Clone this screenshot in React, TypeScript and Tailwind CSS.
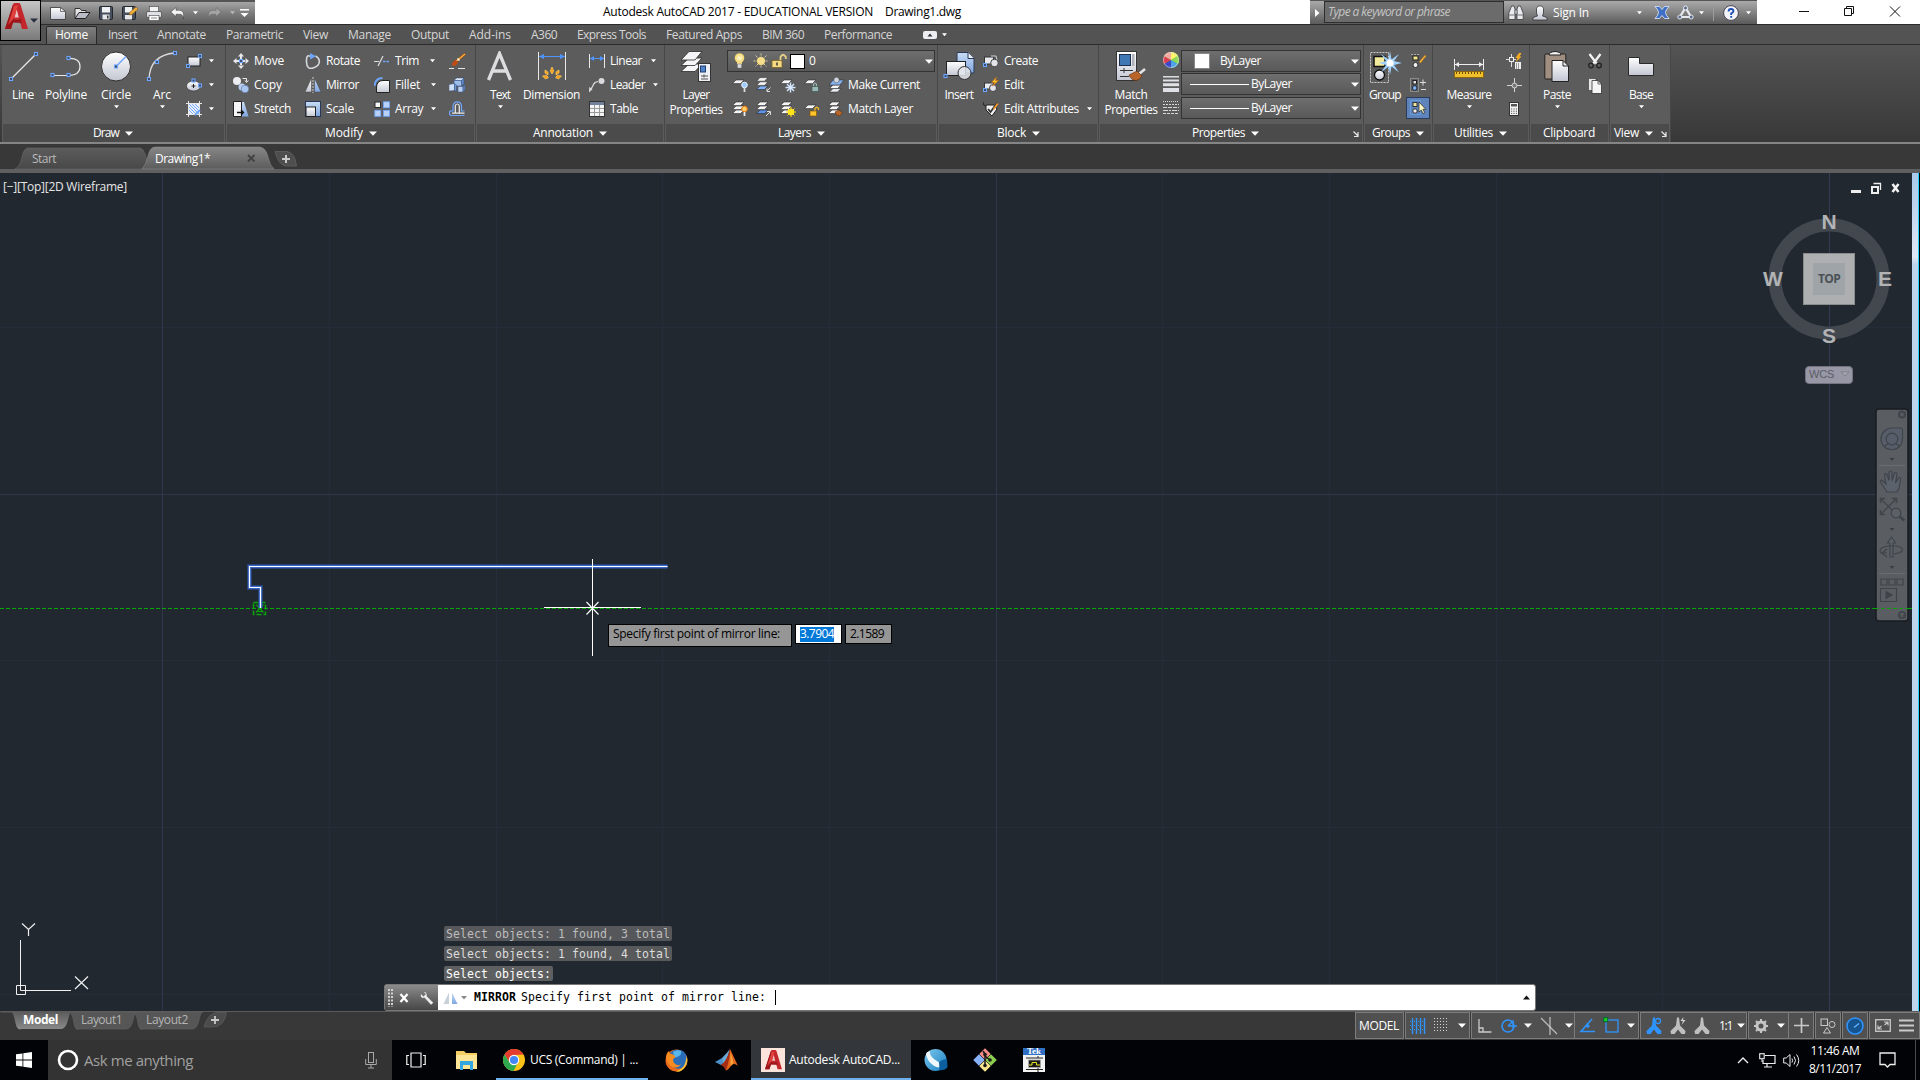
import React, { useLayoutEffect, useRef, useState } from "react";

/* Text whose tracking is computed so that it fills a known width. */
function T({ s, w, c = "" }: { s: string; w: number; c?: string }) {
  const ref = useRef<HTMLSpanElement>(null);
  const [ls, setLs] = useState(0);
  useLayoutEffect(() => {
    if (!ref.current) return;
    const natural = ref.current.getBoundingClientRect().width;
    setLs((w - natural) / s.length);
  }, [s, w]);
  return (
    <span ref={ref} className={"inline-block whitespace-pre shrink-0 " + c} style={{ letterSpacing: ls }}>
      {s}
    </span>
  );
}

function Svg({ w, h, c = "", children }: { w: number; h: number; c?: string; children: React.ReactNode }) {
  return (
    <svg width={w} height={h} viewBox={`0 0 ${w} ${h}`} className={"shrink-0 block " + c} fill="none">
      {children}
    </svg>
  );
}

function Arrow({ c = "", big = false, fill = "#fff" }: { c?: string; big?: boolean; fill?: string }) {
  return big ? (
    <Svg w={8} h={5} c={c}><path d="M0 0.5h8L4 4.8z" fill={fill} /></Svg>
  ) : (
    <Svg w={5} h={4} c={c}><path d="M0 0.3h5L2.5 3.3z" fill={fill} /></Svg>
  );
}

const B = "#6ea6ff";
const Node = ({ x, y }: { x: number; y: number }) => (
  <rect x={x - 1.5} y={y - 1.5} width="3" height="3" fill="#3a4660" stroke={B} strokeWidth="1.1" />
);

function Defs() {
  return (
    <svg width="0" height="0" className="absolute">
      <defs>
        <linearGradient id="wg" x1="0" y1="0" x2="0" y2="1"><stop offset="0" stopColor="#fff" /><stop offset="1" stopColor="#c3c7d3" /></linearGradient>
        <linearGradient id="bg" x1="0" y1="0" x2="0" y2="1"><stop offset="0" stopColor="#c9dcf5" /><stop offset="1" stopColor="#7fa6e0" /></linearGradient>
        <linearGradient id="tabOn" x1="0" y1="0" x2="0" y2="1"><stop offset="0" stopColor="#868686" /><stop offset="1" stopColor="#5c5c5c" /></linearGradient>
        <linearGradient id="tabOff" x1="0" y1="0" x2="0" y2="1"><stop offset="0" stopColor="#5c5c5c" /><stop offset="1" stopColor="#484848" /></linearGradient>
        <linearGradient id="modOn" x1="0" y1="0" x2="0" y2="1"><stop offset="0" stopColor="#5c5c5c" /><stop offset="1" stopColor="#8a8a8a" /></linearGradient>
        <linearGradient id="sky" x1="0" y1="0" x2="1" y2="1"><stop offset="0" stopColor="#7cc8ee" /><stop offset="1" stopColor="#1b7fc0" /></linearGradient>
        <radialGradient id="glow"><stop offset="0" stopColor="#fffbd8" /><stop offset="1" stopColor="#f4d46a" /></radialGradient>
      </defs>
    </svg>
  );
}

/* ---------- title bar ---------- */
function AutoA({ s, c = "" }: { s: number; c?: string }) {
  return (
    <svg width={s} height={s * 1.13} viewBox="0 0 23 26" className={"shrink-0 block " + c}>
      <path d="M0 26 8 1.5Q8.5 0 10 0h3.5Q15 0 15.500 1.5L23 26h-6l-1.700-6.500H8L6 26z" fill="#c3272b" />
      <path d="M9.500 14.500 11.700 6 13.800 14.500z" fill="#e9c3c1" />
      <path d="M8 1.500 0 26l6 0 2-6.500 6-2.500-5 0z" fill="#9c1519" />
      <path d="M9 3 13.500 2 11.700 6 9.500 14.500 3 22z" fill="#e0413f" />
      <path d="M8 19.500l8-4 1 5z" fill="#7e0d11" opacity=".55" />
    </svg>
  );
}

function TitleBar() {
  return (
    <div className="relative flex h-[24px] shrink-0 bg-white text-[12px] leading-none">
      <div className="absolute left-0 top-0 z-10 flex h-[41px] w-[41px] border border-black bg-linear-to-b from-[#c6c6c6] to-[#7a7a7a] pl-[4px] pt-[2px]">
        <AutoA s={23} />
        <Arrow big c="mt-[15px] ml-[2px]" fill="#2b3140" />
      </div>
      <div className="flex w-[255px] shrink-0 items-center border-t-2 border-[#555] bg-linear-to-b from-[#a6a6a6] via-[#7d7d7d] to-[#5c5c5c] pl-[50px]">
        <Svg w={16} h={14}><path d="M.5 1.500h10l5 4v8H.5z" fill="url(#wg)" stroke="#333" strokeWidth=".8" /><path d="M10.500 1.500v4h5" stroke="#555" strokeWidth=".8" /></Svg>
        <Svg w={17} h={14} c="ml-[8px]"><path d="M1 12V2.500h5l1.500 2H12V7" fill="#e4e4e6" stroke="#333" /><path d="M1 12.500 5 6.500h11l-4.500 6z" fill="#b9bdc5" stroke="#222" /></Svg>
        <Svg w={15} h={14} c="ml-[8px]"><rect x=".5" y=".5" width="13" height="13" rx="1" fill="#474f5c" stroke="#22262d" /><rect x="3" y="1" width="8" height="5.500" fill="#f0f1f3" /><rect x="3.500" y="8.500" width="7" height="5" fill="#e4e6ea" /><rect x="8" y="9.500" width="1.500" height="3" fill="#333" /></Svg>
        <Svg w={16} h={14} c="ml-[8px]"><rect x=".5" y=".5" width="13" height="13" rx="1" fill="#474f5c" stroke="#22262d" /><rect x="3" y="1" width="7" height="5.500" fill="#f0f1f3" /><rect x="3" y="9" width="7" height="4.500" fill="#e4e6ea" /><path d="m7 9 1-3 6-5 2 2-6 5.500z" fill="#f0b13a" stroke="#8a5a14" strokeWidth=".6" /></Svg>
        <Svg w={16} h={15} c="ml-[8px]"><rect x="3.500" y=".5" width="9" height="6" fill="#f4f4f6" stroke="#444" strokeWidth=".6" /><rect x=".5" y="5.500" width="15" height="6" rx="1.500" fill="#dfe1e6" stroke="#333" strokeWidth=".6" /><rect x="3" y="9.500" width="10" height="5" fill="#fbfbfb" stroke="#444" strokeWidth=".6" /><path d="M5 12h6" stroke="#888" /></Svg>
        <Svg w={16} h={12} c="ml-[8px]"><path d="M.8 5 6 .5v2.800h4q4.500.4 3.500 8.500-.5-4.300-3.500-4.500H6v2.300z" fill="#f2f2f3" stroke="#3a3a3a" strokeWidth=".5" /></Svg>
        <Arrow c="ml-[7px]" />
        <Svg w={15} h={12} c="ml-[9px]"><path d="M14.200 5 9 .5v2.800H5Q.8 3.700 1.500 11.800q.5-4.300 3.500-4.500h4v2.300z" fill="#a3a3a3" stroke="#666" strokeWidth=".5" /></Svg>
        <Arrow c="ml-[8px]" fill="#b8b8b8" />
        <Svg w={9} h={9} c="ml-[5px]"><path d="M0 .8h9" stroke="#fff" strokeWidth="1.500" /><path d="M.5 4h8l-4 4z" fill="#fff" /></Svg>
      </div>
      <div className="flex w-[1055px] shrink-0 pl-[348px] pt-[5px] leading-[14px] text-black">
        <T s="Autodesk AutoCAD 2017 - EDUCATIONAL VERSION" w={270} />
        <T s="Drawing1.dwg" w={76} c="ml-[12px]" />
      </div>
      <div className="flex w-[447px] shrink-0 items-center border-t border-[#555] bg-linear-to-b from-[#aaa] via-[#838383] to-[#5a5a5a] text-white">
        <Svg w={14} h={10}><path d="M5 1v8l4.500-4z" fill="#fff" /></Svg>
        <div className="mt-[-1px] flex h-[22px] w-[180px] items-center border border-[#2e2e2e] bg-[#6b6b6b] pl-[3px] italic text-[#c4c4c4]">
          <T s="Type a keyword or phrase" w={122} />
        </div>
        <Svg w={16} h={16} c="ml-[4px]"><path d="M2 5 3.500 1h2.500l1 3v10.500H.8V8zM14 5 12.500 1H10L9 4v10.500h6.200V8z" fill="#e9eaee" stroke="#3a3a3a" strokeWidth=".8" /><path d="M7 5h2v4H7z" fill="#cfd1d6" stroke="#3a3a3a" strokeWidth=".5" /><path d="M1 10h6M9 10h6" stroke="#777" /></Svg>
        <Svg w={16} h={16} c="ml-[8px]"><path d="M1 15v-2.500l4.500-1.500L4.500 8V3.500Q5 .8 8 .8t3.500 2.700V8l-1 3 4.500 1.500V15z" fill="url(#wg)" stroke="#333" strokeWidth=".8" /></Svg>
        <T s="Sign In" w={36} c="ml-[5px]" />
        <Arrow c="ml-[48px]" />
        <Svg w={16} h={15} c="ml-[12px]"><path d="M1 1.500h4.500l2.500 3 2.500-3H15Q11.500 5 11.500 7.500T15 13.500h-4.500l-2.500-3-2.500 3H1Q4.500 10 4.500 7.500T1 1.500z" fill="#3f6fc4" stroke="#d6e0f4" strokeWidth=".9" /></Svg>
        <Svg w={17} h={15} c="ml-[7px]"><path d="M8.500 2.500 3 12h11z" stroke="#e7e9ef" strokeWidth="2.200" /><circle cx="8.500" cy="3" r="2" fill="#5a6a90" stroke="#e7e9ef" /><circle cx="2.800" cy="12" r="2" fill="#5a6a90" stroke="#e7e9ef" /><circle cx="14.200" cy="12" r="2" fill="#5a6a90" stroke="#e7e9ef" /></Svg>
        <Arrow c="ml-[5px]" />
        <div className="ml-[9px] h-[17px] w-px bg-[#9b9b9b]" />
        <Svg w={16} h={16} c="ml-[9px]"><circle cx="8" cy="8" r="7.400" fill="#f2f4f8" stroke="#445" /><path d="M5.600 6.400Q5.600 4 8 4t2.400 2.200Q10.400 7.600 8.200 8.400V10M8.200 11v1.800" stroke="#1d4fb5" strokeWidth="1.900" /></Svg>
        <Arrow c="ml-[7px]" />
      </div>
      <Svg w={160} h={22}>
        <path d="M42 11.500h10M87.500 8.500h7v7h-7zM89.500 8.500v-2h7v7h-2M133 6.500l10 10M143 6.500l-10 10" stroke="#111" />
      </Svg>
    </div>
  );
}

const TABS: [string, number][] = [
  ["Insert", 29], ["Annotate", 49], ["Parametric", 57], ["View", 25], ["Manage", 43], ["Output", 38], ["Add-ins", 42],
  ["A360", 26], ["Express Tools", 69], ["Featured Apps", 76], ["BIM 360", 42], ["Performance", 68],
];

function RibbonTabs() {
  return (
    <div className="flex h-[21px] shrink-0 items-center border-b border-t border-[#2b2b2b] bg-[#535353] pl-[46px] text-[12px] leading-[14px] text-[#d6d6d6]">
      <div className="flex h-[18px] w-[51px] self-end items-center rounded-t-[2px] border border-b-0 border-[#272727] bg-linear-to-b from-[#7e7e7e] to-[#5f5f5f] pb-[2px] pl-[8px] text-white">
        <T s="Home" w={33} />
      </div>
      <div className="ml-[11px] flex gap-[20px]">
        {TABS.map(([s, w]) => <T key={s} s={s} w={w} />)}
      </div>
      <Svg w={14} h={8} c="ml-[31px]"><rect width="14" height="8" rx="2" fill="#eceef2" /><path d="M4.500 5.500h5L7 2.500z" fill="#333" /></Svg>
      <Arrow c="ml-[5px]" />
    </div>
  );
}

/* ---------- ribbon building blocks ---------- */
function Panel({ cls, title, w, pre, dialog = 0, noArrow = false, children }: any) {
  return (
    <div className={"flex shrink-0 flex-col border-r border-[#474747] bg-[#5c5c5c] " + cls}>
      <div className="flex h-[79px]">{children}</div>
      <div className={"mx-px flex h-[18px] items-center bg-[#4b4b4b] leading-[14px] " + pre}>
        <T s={title} w={w} />
        {!noArrow && <Arrow big c="ml-[6px]" />}
        {dialog > 0 && <Svg w={6} h={6} c={dialog === 1 ? "ml-[94px] mt-[2px]" : "ml-[8px] mt-[2px]"}><path d="M.5.5l4 4M5 1v4.500H1" stroke="#e8e8e8" strokeWidth="1.200" /></Svg>}
      </div>
    </div>
  );
}

function Big({ cls, icon, label, w, label2, w2, arrow }: any) {
  return (
    <div className={"flex shrink-0 flex-col items-center pt-[6px] leading-[15px] " + cls}>
      <div className="flex h-[32px] items-start justify-center">{icon}</div>
      <T s={label} w={w} c="mt-[4px]" />
      {label2 && <T s={label2} w={w2} />}
      {arrow && <Arrow c="mt-[3px]" />}
    </div>
  );
}

function Row({ icon, label, w, arrow }: any) {
  return (
    <div className="flex h-[24px] items-center leading-[16px]">
      {icon}
      {label && <T s={label} w={w} c="ml-[5px]" />}
      {arrow && <Arrow c={arrow} />}
    </div>
  );
}

const RowCol = ({ cls = "", children }: any) => <div className={"flex shrink-0 flex-col pt-[4px] " + cls}>{children}</div>;

/* ---------- small icons ---------- */
const ic = {
  rect: <Svg w={16} h={16}><rect x="2" y="4" width="12" height="9" fill="url(#wg)" stroke="#222" /><Node x={14} y={3} /><Node x={2} y={13} /></Svg>,
  ellipse: <Svg w={16} h={16}><ellipse cx="7.500" cy="9" rx="7" ry="5" fill="url(#wg)" stroke="#333" strokeWidth=".6" /><path d="M5.500 9h4M7.500 7v4" stroke="#222" /><Node x={7.500} y={3.500} /><Node x={14} y={8.500} /></Svg>,
  hatch: <Svg w={16} h={16}><rect x="3" y="3" width="10" height="10" fill="#e6edf8" /><path d="M3 9l4 4M3 6l7 7M3 3l10 10M6 3l7 7M9 3l4 4" stroke={B} strokeWidth=".9" /><path d="M0 2.500h16M0 13.500h16M2.500 0v16M13.500 0v16" stroke="#e8e8e8" /><path d="M9 14l5-5" stroke={B} strokeWidth="2" /></Svg>,
  move: <Svg w={16} h={16}><path d="M8 0l3 3.500H5zM8 16l3-3.500H5zM0 8l3.500-3v6zM16 8l-3.500-3v6zM7 3h2v3H7zM7 10h2v3H7zM3 7h3v2H3zM10 7h3v2h-3z" fill="#e7e8ec" /><Node x={8} y={8} /></Svg>,
  copy: <Svg w={16} h={16}><circle cx="4" cy="4" r="4" fill="#eceef3" /><circle cx="9" cy="10" r="3.500" fill="#b6cdf0" /><circle cx="12" cy="12" r="3.800" fill="#a9c6f2" stroke="#5a6f96" strokeWidth=".6" /><path d="M9.500 1.500h4v3M12 3.500l1.500 2 1.800-2" stroke="#eee" /></Svg>,
  stretch: <Svg w={16} h={16}><path d="M9 1h2l4.500 14.500H9z" fill="url(#bg)" /><path d="M.5.5h8v15h-8z" fill="#f5f5f7" stroke="#222" /><path d="M4 11.500h6M8 9l2.500 2.500L8 14" stroke="#111" strokeWidth="1.300" /></Svg>,
  rotate: <Svg w={16} h={16}><path d="M10.500 3Q14.500 5 14.300 9T8 15 1.500 9 5 3.200" stroke="#d5d7dc" strokeWidth="1.600" /><path d="M5 0l6 3.200-6 3.200z" fill={B} /></Svg>,
  mirror: <Svg w={16} h={16}><path d="M6.500 1v14H0z" fill="url(#wg)" stroke="#444" strokeWidth=".5" /><path d="M9.500 1v14H16z" fill="url(#bg)" stroke="#444" strokeWidth=".5" /><path d="M8 0v16" stroke="#eee" strokeWidth=".8" strokeDasharray="2 1" /></Svg>,
  scale: <Svg w={16} h={16}><rect x=".5" y=".5" width="15" height="15" fill="url(#bg)" stroke="#29395c" /><rect x="1" y="6" width="9.500" height="9.500" fill="url(#wg)" stroke="#222" /></Svg>,
  trim: <Svg w={16} h={16}><path d="M0 8.500h5M4 13 9 3" stroke="#dadce0" strokeWidth="1.200" /><path d="M9 8.500h7" stroke={B} strokeWidth="1.300" strokeDasharray="2.500 1" /></Svg>,
  fillet: <Svg w={16} h={16}><path d="M2.500 15.500V10Q3 3.500 9 3.500h6.500v12z" fill="url(#wg)" stroke="#222" /><path d="M.5 9Q1 1.500 8.500 1" stroke={B} strokeWidth="1.800" /></Svg>,
  array: <Svg w={16} h={16}><rect x="1" y="1" width="5.500" height="5.500" fill="#f7f7f7" stroke="#2b2b2b" /><g fill="#b7d1f8" stroke={B} strokeWidth=".8"><rect x="9.500" y=".8" width="6" height="6" /><rect x=".8" y="9.300" width="6" height="6" /><rect x="9.500" y="9.300" width="6" height="6" /></g></Svg>,
  erase: <Svg w={17} h={16}><path d="M15.500 0 17 1.500 8 9 6.500 7.500z" fill="#f6a83a" stroke="#7b3d10" strokeWidth=".6" /><path d="M6.500 7 9 9.500Q7 14 3 12.500q0-4 3.500-5.500z" fill="#c24b14" /><path d="M8.500 5.500l2 2" stroke="#fff" strokeWidth="1.500" /><path d="M0 15.500h5M9 15.500h7" stroke="#e6e6e6" /></Svg>,
  explode: <Svg w={16} h={16}><path d="M5 3.500l2.500-2.500H15l-2.500 2.500z" fill="#dbe8fa" stroke="#35507e" strokeWidth=".5" /><path d="M12.500 3.500 15 1v6l-2.500 2z" fill="#5d87c9" stroke="#35507e" strokeWidth=".5" /><path d="M5 3.500h7.500V9H5z" fill="#9dbdea" stroke="#35507e" strokeWidth=".5" /><path d="M0 7.500l5.500-1v7L0 14z" fill="#cfe0f8" stroke="#35507e" strokeWidth=".5" /><path d="M5.500 6.500 7.500 8v6l-2-.5z" fill="#6f97d3" stroke="#35507e" strokeWidth=".5" /><path d="M9 9.500h5V15H9z" fill="#b9d0f3" stroke="#35507e" strokeWidth=".5" /><path d="M14 9.500l2-2V13l-2 2z" fill="#5d87c9" stroke="#35507e" strokeWidth=".5" /></Svg>,
  offset: <Svg w={16} h={16}><path d="M15.500 14.500h-13Q.5 14.500.5 12t2-2H4V5Q4.500.8 8.300.8T12.500 5v5h3" stroke={B} strokeWidth="1.200" /><path d="M15.500 12.200H3M6.300 12V5q.3-2 2-2t2 2v7" stroke="#eee" strokeWidth="1.200" /></Svg>,
  linear: <Svg w={16} h={16}><path d="M.5 1v14M15.500 1v14" stroke="#e8e8e8" /><path d="M1 5.500h14" stroke="#4f94ff" /><path d="M1 5.500 5 3v5zM15 5.500 11 3v5z" fill="#4f94ff" /></Svg>,
  leader: <Svg w={16} h={16}><path d="M1.500 12.500Q3.500 10 4.500 7.500T9 4.500" stroke="#dcdcdc" strokeWidth="1.200" /><path d="M0 15.500.2 10l3.500 2z" fill="#dcdcdc" /><circle cx="12.500" cy="4" r="3" fill="#d9dade" /></Svg>,
  table: <Svg w={16} h={16}><rect x=".5" y=".5" width="15" height="15" fill="#f4f4f4" stroke="#333" /><rect x="1" y="1" width="14" height="3" fill="#72809c" /><path d="M1 7.500h14M1 11.500h14M5.500 4v11M10.500 4v11" stroke="#9a9a9a" /></Svg>,
  create: <Svg w={16} h={16}><rect x="1.500" y="4" width="9" height="7" fill="#e9eaee" stroke="#333" /><path d="M8 3h5l1 4" stroke="#d0d3da" /><circle cx="11.500" cy="10" r="3.800" fill="#e2e4e9" stroke="#444" /><Node x={2} y={12} /></Svg>,
  edit: <Svg w={16} h={16}><rect x="1.500" y="6" width="9" height="6" fill="#e9eaee" stroke="#333" /><circle cx="10" cy="11" r="3.500" fill="#e2e4e9" stroke="#444" /><path d="M13.500 0 8.500 5.500h3L9.500 9l6-5.500h-3z" fill="#ffc531" stroke="#c26a0c" strokeWidth=".6" /><Node x={2} y={13} /></Svg>,
  attr: <Svg w={16} h={16}><path d="M0 1q0 4 3 4" stroke="#222" /><path d="M3 4h8l3 4-5 7-6-6z" fill="#f0f0f2" stroke="#222" /><path d="M5 8l2.500 3L14 2" stroke="#333" strokeWidth="1.800" /><path d="M10 7.500 14 2l1.500 1-4 5.500z" fill="#f3962b" /></Svg>,
  wheel: <Svg w={16} h={16}><circle cx="8" cy="8" r="8" fill="#3cc43a" /><path d="M8 8V0A8 8 0 0 1 15 4z" fill="#fff36b" /><path d="M8 8l7-4a8 8 0 0 1 0 8z" fill="#8fd955" /><path d="M8 8l7 4a8 8 0 0 1-7 4z" fill="#4fa2e8" /><path d="M8 8v8a8 8 0 0 1-7-4z" fill="#3c47c8" /><path d="M8 8l-7 4a8 8 0 0 1 0-8z" fill="#df3c52" /><path d="M8 8 1 4a8 8 0 0 1 7-4z" fill="#f6a9a0" /><circle cx="8" cy="8" r="7.500" stroke="#ddd" strokeOpacity=".6" /></Svg>,
  lweight: <Svg w={16} h={16}><path d="M0 .8h16" stroke="#dfe1e6" strokeWidth="1.500" /><path d="M0 4.500h16" stroke="#dfe1e6" strokeWidth="2" /><path d="M0 8.700h16" stroke="#dfe1e6" strokeWidth="3" /><path d="M0 14h16" stroke="#dfe1e6" strokeWidth="4" /></Svg>,
  ltype: <Svg w={16} h={16}><path d="M0 1.500h16" stroke="#d8d8d8" strokeDasharray="1 1" /><path d="M0 4.500h16" stroke="#d8d8d8" strokeDasharray="2 1" /><path d="M0 7.500h16" stroke="#d8d8d8" strokeDasharray="4 1" /><path d="M0 10.500h16" stroke="#d8d8d8" strokeDasharray="5 1 2 1" /><path d="M0 13.500h16" stroke="#d8d8d8" strokeDasharray="3 1" /></Svg>,
  gedit: <Svg w={16} h={16}><path d="M1 1.500h9" stroke="#aaa" strokeDasharray="2 1" /><rect x="3" y="3" width="5" height="4" fill="#f1e98a" stroke="#222" /><circle cx="5.500" cy="12" r="2.500" fill="#f1f1f1" stroke="#333" /><path d="M9 9l6-7 1.200 1-5.500 7z" fill="#f4b83a" stroke="#a35e12" strokeWidth=".5" /></Svg>,
  gadd: <Svg w={16} h={16}><rect x=".5" y="1.500" width="8" height="13" stroke="#bbb" strokeDasharray="1 1" /><rect x="3" y="3.500" width="3.500" height="3.500" fill="#e4e4e4" stroke="#222" /><circle cx="4.700" cy="11" r="2.300" fill="#7fb2ef" stroke="#1e2c44" /><path d="M10 5.500h6M13 2.500v6M11 12.500h5" stroke="#ddd" /></Svg>,
  gsel: <Svg w={16} h={16}><rect x=".5" y=".5" width="10" height="14" stroke="#6fb0ff" strokeDasharray="1 1" /><rect x="3" y="2.500" width="4" height="4" fill="#efe9a0" stroke="#333" /><circle cx="5" cy="11" r="2.200" fill="#eee" stroke="#333" /><path d="M9 2v10l2.300-2 1.700 3.500 1.700-.8L13 9.300h2.800z" fill="#fff7c2" stroke="#222" strokeWidth=".7" /></Svg>,
  idpt: <Svg w={17} h={16}><path d="M0 6.500h3M8 6.500h2M5.500 1v3M5.500 9v5" stroke="#ddd" /><rect x="3.500" y="4.500" width="4" height="4" stroke="#eee" /><path d="M13 0 9.500 5h2L10 9l5.500-5.500h-2L15.500 0z" fill="#f7a91f" /><rect x="9" y="9" width="6" height="7" fill="#efefef" /><path d="M10 11h4M10 13h4M10 15h4" stroke="#444" strokeDasharray="1 1" /></Svg>,
  point: <Svg w={16} h={16}><path d="M8.500 1v14M1 8.500h15" stroke="#d5d5d5" /><circle cx="8.500" cy="8.500" r="2.500" stroke="#d5d5d5" fill="#777" /></Svg>,
  calc: <Svg w={16} h={16}><rect x="3.500" y="1.500" width="9" height="13" fill="#f3f3f4" stroke="#333" /><rect x="5" y="3" width="6" height="2.500" fill="#555" /><path d="M5 8h6M5 10.200h6M5 12.400h6" stroke="#555" strokeDasharray="1.200 1.200" /></Svg>,
  cut: <Svg w={16} h={16}><path d="M2.500 1 10 11M13.500 1 6 11" stroke="#f3f3f3" strokeWidth="2.200" /><circle cx="4" cy="12.500" r="2.300" stroke="#222" strokeWidth="1.300" /><circle cx="12" cy="12.500" r="2.300" stroke="#222" strokeWidth="1.300" /></Svg>,
  clip: <Svg w={16} h={17}><path d="M1.500 1.500H9v12H1.500z" fill="#e8e8ea" stroke="#333" strokeWidth=".6" /><path d="M5 3.500h6l3.500 3.500v9.500H5z" fill="#f5f5f6" stroke="#333" strokeWidth=".8" /><path d="M11 3.500V7h3.500" stroke="#444" strokeWidth=".8" /></Svg>,
};

const sheet = (y: number, f = "#f5f5f7", x = 0) => <path d={`M${x + 4} ${y}h8l-3.500 3.600h-8z`} fill={f} stroke="#2b2b2b" strokeWidth=".6" />;
const layerIcons = {
  off: <Svg w={16} h={16}>{sheet(3)}<circle cx="12.500" cy="8" r="2.800" fill="#9dcbff" stroke="#e8f2ff" /><path d="M12.500 11v4" stroke="#ddd" strokeWidth="1.800" /></Svg>,
  iso: <Svg w={16} h={16}>{sheet(9, "#7fb0f5")}{sheet(4.800)}{sheet(.6)}<path d="M14.500 10.500 11 14M11 11.500V14.500h3" stroke="#ddd" /></Svg>,
  freeze: <Svg w={16} h={16}>{sheet(3)}<path d="M10.500 5.500v10M5.500 10.500h10M7 7l7 7M14 7l-7 7" stroke="#d5e8ff" strokeWidth="1.400" /></Svg>,
  lock: <Svg w={16} h={16}>{sheet(3)}<path d="M9.500 10V7.500Q11 4.500 12.500 7.500V10" stroke="#9bb9b4" strokeWidth="1.200" /><rect x="8" y="9.500" width="6.500" height="5" fill="#9bb9b4" stroke="#3c5753" strokeWidth=".7" /></Svg>,
  current: <Svg w={16} h={16}>{sheet(11.500, "#e8ecf4", 1)}{sheet(8, "#f5f5f7", 1)}<path d="M5 3h11l-4 5H1z" fill="#86b2f0" stroke="#2b2b2b" strokeWidth=".6" /><circle cx="8.500" cy="3" r="2.700" fill="#d5d9e2" stroke="#444" strokeWidth=".5" /></Svg>,
  on: <Svg w={16} h={16}>{sheet(9)}{sheet(5)}{sheet(1)}<circle cx="12.500" cy="8" r="2.800" fill="#ffcf6b" stroke="#f07c12" /><path d="M12.500 11v4" stroke="#eee" strokeWidth="1.800" /></Svg>,
  uniso: <Svg w={16} h={16}>{sheet(9, "#5b93ea")}{sheet(5)}{sheet(1)}<path d="M10 15l4-4M11 10.500h3.500V14" stroke="#ddd" /></Svg>,
  thaw: <Svg w={16} h={16}>{sheet(9)}{sheet(5)}{sheet(1)}<circle cx="11" cy="11" r="3.300" fill="#ffe31a" /><path d="M11 6v10M6 11h10M7.500 7.500l7 7M14.500 7.500l-7 7" stroke="#ffe31a" /></Svg>,
  unlock: <Svg w={16} h={16}>{sheet(4)}<path d="M11 10V7.500Q12.700 5 14.500 7.500V9" stroke="#f5b81f" strokeWidth="1.300" /><rect x="6" y="10" width="6.500" height="5" fill="#ffc42c" stroke="#8a5a0a" strokeWidth=".7" /></Svg>,
  match: <Svg w={16} h={16}>{sheet(9)}{sheet(5)}{sheet(1)}<path d="M7 11l4-2 3.500 3-3 3q-3 0-4.500-4z" fill="#b7672b" stroke="#5e2c08" strokeWidth=".6" /></Svg>,
};

/* ---------- ribbon ---------- */
function Combo({ cls, children }: any) {
  return <div className={"flex shrink-0 items-center border border-[#333] bg-linear-to-b from-[#6e6e6e] to-[#595959] leading-[16px] " + cls}>{children}</div>;
}

function Ribbon() {
  return (
    <div className="flex h-[99px] shrink-0 border-b-[2px] border-b-[#858585] bg-linear-to-b from-[#545454] to-[#383838] pl-[2px] text-[12px] text-white">
      <Panel cls="w-[224px]" title="Draw" w={26} pre="pl-[90px]">
        <Big cls="w-[42px]" label="Line" w={22} icon={<Svg w={32} h={32}><path d="M4 28 29 3" stroke="#e8e8e8" strokeWidth="1.200" /><Node x={4} y={28} /><Node x={29} y={3} /></Svg>} />
        <Big cls="w-[44px]" label="Polyline" w={42} icon={<Svg w={32} h={32}><path d="M2 24.500h17Q30 24 30 15.500T19 7.500" stroke="#e8e8e8" strokeWidth="1.200" /><Node x={2.500} y={24} /><Node x={18.500} y={24} /><Node x={18.500} y={7} /></Svg>} />
        <Big cls="w-[56px]" label="Circle" w={30} arrow icon={<Svg w={32} h={32}><circle cx="16" cy="15.500" r="14.500" fill="url(#wg)" stroke="#2e2e2e" /><path d="M16 15.500 26 5.500" stroke={B} strokeWidth="1.400" /><Node x={16} y={15.500} /></Svg>} />
        <Big cls="w-[36px]" label="Arc" w={18} arrow icon={<Svg w={32} h={32}><path d="M3 28Q4 4 29 2" stroke="#dcdcdc" strokeWidth="1.300" /><Node x={3} y={28} /><Node x={11} y={11} /><Node x={29} y={2} /></Svg>} />
        <RowCol cls="pl-[6px]"><Row icon={ic.rect} arrow="ml-[7px]" /><Row icon={ic.ellipse} arrow="ml-[7px]" /><Row icon={ic.hatch} arrow="ml-[7px]" /></RowCol>
      </Panel>
      <Panel cls="w-[250px]" title="Modify" w={38} pre="pl-[98px]">
        <RowCol cls="w-[79px] pl-[7px]"><Row icon={ic.move} label="Move" w={30} /><Row icon={ic.copy} label="Copy" w={28} /><Row icon={ic.stretch} label="Stretch" w={37} /></RowCol>
        <RowCol cls="w-[69px]"><Row icon={ic.rotate} label="Rotate" w={34} /><Row icon={ic.mirror} label="Mirror" w={33} /><Row icon={ic.scale} label="Scale" w={28} /></RowCol>
        <RowCol cls="w-[75px]"><Row icon={ic.trim} label="Trim" w={24} arrow="ml-[11px]" /><Row icon={ic.fillet} label="Fillet" w={25} arrow="ml-[11px]" /><Row icon={ic.array} label="Array" w={28} arrow="ml-[8px]" /></RowCol>
        <RowCol><Row icon={ic.erase} /><Row icon={ic.explode} /><Row icon={ic.offset} /></RowCol>
      </Panel>
      <Panel cls="w-[189px]" title="Annotation" w={60} pre="pl-[56px]">
        <Big cls="ml-[4px] w-[40px]" label="Text" w={20} arrow icon={<Svg w={28} h={31}><path d="M2.500 29 13.500 2.500 24.500 29M6.500 20h14" stroke="#dddddf" strokeWidth="3.300" /></Svg>} />
        <Big cls="w-[63px]" label="Dimension" w={57} icon={<Svg w={28} h={30}><path d="M.5 1v28M27.500 1v28" stroke="#e8e8e8" /><path d="M1 5.500h26" stroke="#4f94ff" /><path d="M1 5.500 6 3v5zM27 5.500 22 3v5z" fill="#4f94ff" /><g fill="#f79a1e" stroke="#ffd35a" strokeWidth=".7"><path d="M14 16l1.700 4-1.700 3-1.700-3zM7 19l3 2v3l-3-2zM21 19l-3 2v3l3-2zM4.500 25l4-.5 2 2-3 1.500zM23.500 25l-4-.5-2 2 3 1.500z" /></g></Svg>} />
        <RowCol cls="ml-[6px]"><Row icon={ic.linear} label="Linear" w={32} arrow="ml-[9px]" /><Row icon={ic.leader} label="Leader" w={35} arrow="ml-[8px]" /><Row icon={ic.table} label="Table" w={28} /></RowCol>
      </Panel>
      <Panel cls="w-[273px]" title="Layers" w={33} pre="pl-[112px]">
        <Big cls="w-[62px]" label="Layer" w={27} label2="Properties" w2={53} icon={<Svg w={30} h={32}><g fill="#f5f5f7" stroke="#2b2b2b" strokeWidth=".8"><path d="M8 13h13l-7 7.500H0z" /><path d="M8 7h13l-7 7.500H0z" /><path d="M8 .5h13L14 9H0z" /></g><rect x="17.500" y="12.500" width="12" height="18" fill="#edf0f4" stroke="#333" /><rect x="19.500" y="15" width="5" height="6" fill="#4d83c8" stroke="#1f3f70" /><path d="M20 25h7M20 28h7M23 23.500v3" stroke="#555" /></Svg>} />
        <div className="flex flex-col pt-[5px]">
          <Combo cls="mb-px h-[22px] w-[208px] pl-[6px]">
            <Svg w={11} h={16}><circle cx="5.500" cy="5" r="4.800" fill="url(#glow)" /><path d="M3 8h5v3H3z" fill="#f4d987" /><path d="M3.500 11h4v4h-4z" fill="#ddd" stroke="#777" strokeWidth=".5" /></Svg>
            <Svg w={16} h={16} c="ml-[8px]"><circle cx="8" cy="8" r="4" fill="url(#glow)" /><path d="M8 .5v15M.5 8h15M2.500 2.500l11 11M13.500 2.500l-11 11" stroke="#e6d9ac" strokeWidth=".9" strokeDasharray="2 1" /><circle cx="8" cy="8" r="3.500" fill="#f5dd8a" /></Svg>
            <Svg w={17} h={16} c="ml-[2px]"><path d="M9.500 8V4Q12-.5 14.800 4v2" stroke="#e6cf86" strokeWidth="1.800" /><rect x="1" y="7.500" width="10" height="7" fill="#f5d884" stroke="#7d6423" strokeWidth=".8" /><path d="M6 9.500v3" stroke="#333" strokeWidth="1.500" /></Svg>
            <div className="ml-[2px] mt-[1px] h-[15px] w-[15px] border border-black bg-white" />
            <T s="0" w={6} c="ml-[4px]" />
            <Arrow big c="ml-auto mr-[1px]" />
          </Combo>
          <div className="flex h-[24px] items-center gap-[8px] pl-[5px] leading-[16px]">{layerIcons.off}{layerIcons.iso}{layerIcons.freeze}{layerIcons.lock}{layerIcons.current}<T s="Make Current" w={72} c="ml-[-4px]" /></div>
          <div className="flex h-[24px] items-center gap-[8px] pl-[5px] leading-[16px]">{layerIcons.on}{layerIcons.uniso}{layerIcons.thaw}{layerIcons.unlock}{layerIcons.match}<T s="Match Layer" w={65} c="ml-[-4px]" /></div>
        </div>
      </Panel>
      <Panel cls="w-[161px]" title="Block" w={29} pre="pl-[58px]">
        <Big cls="w-[42px]" label="Insert" w={29} icon={<Svg w={32} h={32}><path d="M14 1.500h11l6 6V22H14z" fill="url(#bg)" stroke="#2c3a57" /><path d="M25 1.500v6h6" fill="#e6effc" stroke="#2c3a57" /><rect x="3.500" y="10.500" width="19" height="14" fill="url(#wg)" stroke="#222" /><circle cx="21.500" cy="22" r="6.500" fill="#e4e6ec" fillOpacity=".85" stroke="#333" /><Node x={2.500} y={25} /></Svg>} />
        <RowCol cls="ml-[3px]"><Row icon={ic.create} label="Create" w={34} /><Row icon={ic.edit} label="Edit" w={20} /><Row icon={ic.attr} label="Edit Attributes" w={75} arrow="ml-[8px]" /></RowCol>
      </Panel>
      <Panel cls="w-[265px]" title="Properties" w={53} pre="pl-[92px]" dialog={1}>
        <Big cls="w-[64px]" label="Match" w={33} label2="Properties" w2={53} icon={<Svg w={30} h={32}><rect x=".5" y=".5" width="20" height="29" fill="url(#wg)" stroke="#333" /><rect x="3.500" y="3.500" width="11" height="11" fill="#3f77b5" stroke="#1d2f4a" /><rect x="16" y="3" width="2.500" height="12" fill="#aeb2bb" /><path d="M4 19.500h13M8 17v5M4 25.500h9" stroke="#333" /><path d="M29 18 23 23" stroke="#e5e5e5" strokeWidth="2.500" /><path d="M13 24l8-4 5 5q-2 4-6 4.500-5-.5-7-5.500z" fill="#b9652a" stroke="#5e2c08" strokeWidth=".6" /></Svg>} />
        <div className="flex w-[18px] flex-col pt-[7px]">{ic.wheel}<div className="h-[8px]" />{ic.lweight}<div className="h-[8px]" />{ic.ltype}</div>
        <div className="flex flex-col gap-[1px] pt-[5px]">
          <Combo cls="h-[22px] w-[180px] pl-[12px]"><div className="h-[16px] w-[16px] border border-[#888] bg-white" /><T s="ByLayer" w={41} c="ml-[10px]" /><Arrow big c="ml-auto mr-[1px]" /></Combo>
          <Combo cls="h-[22px] w-[180px] pl-[8px]"><div className="h-px w-[59px] bg-white" /><T s="ByLayer" w={41} c="ml-[2px]" /><Arrow big c="ml-auto mr-[1px]" /></Combo>
          <Combo cls="mt-px h-[22px] w-[180px] pl-[8px]"><div className="h-px w-[59px] bg-white" /><T s="ByLayer" w={41} c="ml-[2px]" /><Arrow big c="ml-auto mr-[1px]" /></Combo>
        </div>
      </Panel>
      <Panel cls="w-[69px]" title="Groups" w={38} pre="pl-[7px]">
        <Big cls="w-[42px]" label="Group" w={32} icon={<Svg w={34} h={34}><rect x="2.500" y="1.500" width="18" height="30" stroke="#c9c9c9" strokeDasharray="2 1" /><rect x="6" y="5.500" width="11" height="10" fill="#f3ea9c" stroke="#111" strokeWidth="1.500" /><circle cx="11.500" cy="24" r="5" fill="url(#wg)" stroke="#111" strokeWidth="1.300" /><path d="M22 0l1.500 8.500L31 3l-5 7 8 2-8 2 5 7.500-7.500-6L22 24l-1.500-8.500-7.500 6 5-7.500-7-2 7-2-5-7 7.500 5.500z" fill="#9fd2ff" /><circle cx="22" cy="12" r="3.500" fill="#fff" /></Svg>} />
        <RowCol><div className="pl-[4px]"><Row icon={ic.gedit} /><Row icon={ic.gadd} /></div><div className="flex h-[22px] w-[24px] items-center justify-center border border-[#2a3b5c] bg-[#5f83bb]">{ic.gsel}</div></RowCol>
      </Panel>
      <Panel cls="w-[97px]" title="Utilities" w={39} pre="pl-[20px]">
        <Big cls="ml-[14px] w-[44px]" label="Measure" w={45} arrow icon={<Svg w={30} h={32}><path d="M.5 8v11M29.500 8v11M1 13.500h28" stroke="#eee" /><path d="M1 13.500 5 11v5zM29 13.500 25 11v5z" fill="#eee" /><rect x=".5" y="20.500" width="29" height="6" fill="#f0c02c" stroke="#8a6510" /><path d="M2 22h27" stroke="#6b4d08" strokeWidth="2" strokeDasharray="1 2" /></Svg>} />
        <RowCol cls="ml-[15px]"><Row icon={ic.idpt} /><Row icon={ic.point} /><Row icon={ic.calc} /></RowCol>
      </Panel>
      <Panel cls="w-[80px]" title="Clipboard" w={52} pre="pl-[12px]" noArrow>
        <Big cls="ml-[9px] w-[36px]" label="Paste" w={28} arrow icon={<Svg w={26} h={32}><rect x=".8" y="3" width="21" height="25" rx="1" fill="#a08f80" stroke="#222" /><path d="M5 4q0-3 6-3.500Q17 1 17 4z" fill="#f4f4f4" stroke="#222" /><path d="M8 9.500h11l5.500 5.500v15.500H8z" fill="url(#wg)" stroke="#222" /><path d="M19 9.500V15h5.500" stroke="#222" /></Svg>} />
        <RowCol cls="ml-[12px]"><Row icon={ic.cut} /><Row icon={ic.clip} /></RowCol>
      </Panel>
      <Panel cls="w-[61px]" title="View" w={25} pre="pl-[3px]" dialog={2}>
        <Big cls="ml-[9px] w-[44px]" label="Base" w={24} arrow icon={<Svg w={28} h={32}><path d="M1.500 6.500h11v6h14v12h-25z" fill="url(#wg)" stroke="#2a2a2a" /></Svg>} />
      </Panel>
    </div>
  );
}

/* ---------- file tabs ---------- */
function FileTabs() {
  return (
    <div className="relative flex h-[29px] shrink-0 border-b-[4px] border-[#5f5f5f] bg-[#383838] text-[12px] leading-[16px]">
      <Svg w={300} h={25} c="mt-[1px]">
        <path d="M15 24Q20 22 22 12T29 3H140Q146 4 148 24z" fill="url(#tabOff)" stroke="#6a6a6a" strokeWidth=".6" />
        <path d="M142 24Q146 20 148 11T155 2H260Q266 3 268 12T274 24z" fill="url(#tabOn)" stroke="#8c8c8c" strokeWidth=".6" />
        <path d="M275 6.500h12q8 1 9.500 14.500h-11q-7-1-10.500-14.500z" fill="#4e4e4e" stroke="#666" strokeWidth=".7" />
        <path d="M282 14h8M286 10v8" stroke="#c9c9c9" strokeWidth="2" />
        <path d="M248 10l6.500 6.500M254.500 10l-6.500 6.500" stroke="#424242" strokeWidth="1.800" />
      </Svg>
      <div className="absolute left-[32px] top-[7px] flex">
        <T s="Start" w={24} c="text-[#b9b9b9]" />
        <T s="Drawing1*" w={55} c="ml-[99px] text-white" />
      </div>
    </div>
  );
}

/* ---------- drawing canvas ---------- */
function NavBar() {
  return (
    <Svg w={34} h={214}>
      <rect x="1" y="1" width="32" height="212" rx="3" fill="#5a5e62" stroke="#191d22" strokeWidth="1.500" />
      <g stroke="#3f444b" strokeWidth="1.200">
        <circle cx="27" cy="6.500" r="3.500" fill="#45494f" /><path d="M25.500 5l3 3M28.500 5l-3 3" stroke="#6c7075" strokeWidth=".8" />
        <path d="M6 31a11 11 0 0 1 11-11h8.500q2 0 2 2v9a10.500 10.500 0 0 1-21.500 0z" fill="#585e69" /><circle cx="17" cy="31" r="5.800" /><path d="M9.500 38.500l4-3.500M24.500 38.500l-4-3.500" />
        <path d="M12 84 5.500 74q-1-2 1.500-1.800l4 3.800-1.500-9q.5-2.500 2.500-.5l2 6V64q1.500-2 3 0v8.500l2.500-7.500q2-1.500 2.500 1l-1.500 9 3-5q2.500-1 2 1.500L24 80l-2 4z" fill="#5c626c" />
        <path d="M6 91l15 15M6 106 21 91" /><path d="M5.500 95v-4.500H10M17 90.500h4.500V95M5.500 102v4.500H10" strokeWidth="1.600" /><circle cx="21" cy="105" r="4.800" fill="#5b6167" /><path d="M24.500 108.500l5 4" strokeWidth="2.800" />
        <path d="M15 149v-14h-2.500l4-6 4 6H18v14z" fill="#5b6167" /><path d="M12 145H6q-3-4 3-6 8-2.500 16 0 5 2.500 0 5.500l-6 1.500M12 141l-5 4 5 4" />
        <path d="M6 171h6v6H6zM14 171h6v6h-6zM22 171h6v6h-6zM5.500 180.500h16v13h-16z" /><path d="M11 183.500v7l6-3.500z" fill="#3f444b" />
        <circle cx="27" cy="207" r="3.500" fill="#45494f" /><path d="M25 206h4M26 208h2" stroke="#777" strokeWidth=".8" />
      </g>
      <path d="M4 57.500h26M4 165.500h26" stroke="#6a6e72" />
      <path d="M14.500 50h5l-2.500 3zM14.500 120h5l-2.500 3zM14.500 158h5l-2.500 3z" fill="#3b3f45" />
      <path d="M0 200.500h34" stroke="#0da10d" strokeDasharray="4 2" />
    </Svg>
  );
}

const MINOR_X = [329.5, 496.5, 662.5, 829.5, 1162.5, 1329.500, 1496.5, 1662.5];
const MAJOR_X = [162.5, 996.5, 1829.5];

function Canvas() {
  return (
    <div className="relative flex h-[838px] shrink-0 overflow-hidden bg-[#212830]">
      <svg width="1912" height="838" viewBox="0 173 1912 838" className="block shrink-0" fill="none">
        {MINOR_X.map((x) => <path key={x} d={`M${x} 173v838`} stroke="#252d3a" />)}
        <path d="M0 327.500h1912M0 660.500h1912M0 827.500h1912M0 994.500h1912" stroke="#252d3a" />
        {MAJOR_X.map((x) => <path key={x} d={`M${x} 173v838`} stroke="#2e374c" />)}
        <path d="M0 494.500h1912" stroke="#2e374c" />
        <path d="M0 608.500h1912" stroke="#06a806" strokeWidth="1.200" strokeDasharray="4 2" />
        <path d="M253.500 602.500h12v12h-12z" stroke="#08a408" strokeWidth="1.500" strokeDasharray="5 2" />
        <path d="M256 604.500l7.500 8M263.500 604.500l-7.500 8M257 611.500h6" stroke="#08a408" strokeWidth="1.200" />
        <path d="M667.500 566.500H249.500V587.500H260.500V608" stroke="#2a55b0" strokeWidth="5" strokeOpacity=".55" />
        <path d="M667.500 566.500H249.500V587.500H260.500V608" stroke="#3c6fd8" strokeWidth="3" strokeOpacity=".8" />
        <path d="M667.500 566.500H249.500V587.500H260.500V608" stroke="#fff" strokeWidth="1.200" />
        <path d="M592.500 559v97M544 607.500h97" stroke="#fff" />
        <path d="M586.500 602l12 12.500M598.500 602l-12 12.500" stroke="#fff" strokeWidth="1.100" />
        <path d="M20.500 940v50.500h50.500M16.500 985.500h9v9h-9z" stroke="#f0f0f0" />
        <path d="M22 923.500l6.500 6 6.500-6M28.500 929.500v6.500M75 976.500l13 12.500M88 976.500l-13 12.500" stroke="#f0f0f0" strokeWidth="1.200" />
        <circle cx="1829" cy="279" r="54" stroke="#43484f" strokeWidth="13" />
        <path d="M1829.500 173v838" stroke="#39425a" strokeOpacity=".5" />
      </svg>
      <div className="h-full w-[6px] bg-linear-to-b from-[#a9c8ea] from-0% via-[#dfe8f5] via-10% to-[#bed3ec] to-11%" />
      <div className="h-full w-px bg-[#1fd5ff]" />
      <div className="h-full w-px bg-black" />

      <div className="absolute left-[3px] top-[6px] text-[12px] leading-[16px] text-[#e6e6e6]"><T s="[−][Top][2D Wireframe]" w={124} /></div>
      <div className="absolute left-[1850px] top-[8px]">
        <Svg w={56} h={14}><path d="M1 9h10v3H1z" fill="#eee" /><path d="M22 6h6v6h-6z" stroke="#eee" strokeWidth="2" /><path d="M23.500 2.500h7V9" stroke="#eee" strokeWidth="1.300" /><path d="M42.500 3l6 8M48.500 3l-6 8" stroke="#f3f3f3" strokeWidth="2.500" /></Svg>
      </div>

      <div className="absolute left-[1761px] top-[35px] grid w-[136px] grid-cols-[24px_88px_24px] font-['Liberation_Sans'] text-[21px] font-bold leading-[28px] text-[#b2b3b5]">
        <span /><span className="text-center">N</span><span />
        <span className="flex items-center justify-center">W</span>
        <div className="flex h-[86px] items-center justify-center">
          <div className="flex h-[52px] w-[52px] items-center justify-center border border-[#8a8c8e] bg-[#aeafb1]">
            <div className="flex h-[32px] w-[32px] items-center justify-center bg-[#9ea4a8] font-['Open_Sans'] text-[12px] text-[#4b5156]"><T s="TOP" w={22} /></div>
          </div>
        </div>
        <span className="flex items-center justify-center">E</span>
        <span /><span className="text-center">S</span><span />
      </div>
      <div className="absolute left-[1805px] top-[193px] flex h-[18px] w-[48px] items-center rounded-[4px] border border-[#73747f] bg-[#9797a6] pb-[2px] pl-[3px] font-['Liberation_Sans'] text-[11px] leading-[14px] text-[#5c5d67]">
        <T s="WCS" w={25} />
        <Svg w={10} h={6} c="ml-[6px]"><path d="M1 .8h8L5 5z" fill="#a6a6b3" stroke="#77787f" strokeWidth=".8" /></Svg>
      </div>
      <div className="absolute left-[1875px] top-[235px]"><NavBar /></div>

      <div className="absolute left-[608px] top-[451px] flex items-start gap-[3px] text-[12px] leading-[14px] text-black">
        <div className="flex h-[23px] w-[184px] border border-black bg-[#969696] pl-[4px] pt-[2px]"><T s="Specify first point of mirror line:" w={167} /></div>
        <div className="flex h-[20px] w-[47px] border border-black bg-white pl-[4px] pt-[2px]"><div className="h-[15px] bg-[#0078d7] text-white"><T s="3.7904" w={34} /></div></div>
        <div className="flex h-[20px] w-[47px] border border-black bg-[#969696] pl-[4px] pt-[2px]"><T s="2.1589" w={34} /></div>
      </div>

      <div className="absolute left-[444px] top-[753px] flex flex-col items-start gap-[5px] font-['DejaVu_Sans_Mono'] text-[11.5px] leading-[15px] text-white">
        <div className="flex h-[15px] rounded-[2px] bg-[#55575a] px-[2px] pt-px text-[#bdbdbd]"><T s="Select objects: 1 found, 3 total" w={224} /></div>
        <div className="flex h-[15px] rounded-[2px] bg-[#58595b] px-[2px] pt-px text-[#dcdcdc]"><T s="Select objects: 1 found, 4 total" w={224} /></div>
        <div className="flex h-[15px] rounded-[2px] bg-[#5e5f61] px-[2px] pt-px"><T s="Select objects:" w={105} /></div>
      </div>
      <div className="absolute left-[384px] top-[811px] flex h-[27px] w-[1152px] items-center rounded-[3px] border border-[#777] bg-white font-['DejaVu_Sans_Mono'] text-[11.5px] text-black">
        <div className="flex h-full w-[53px] items-center bg-linear-to-b from-[#8c8c8c] to-[#474747] pl-[3px]">
          <Svg w={5} h={18}><path d="M1 0v18M4 0v18" stroke="#d0d0d0" strokeWidth="2" strokeDasharray="2 1.500" /></Svg>
          <Svg w={10} h={10} c="ml-[6px]"><path d="M1.500 1l7 8M8.500 1l-7 8" stroke="#fff" strokeWidth="2.300" /></Svg>
          <Svg w={16} h={16} c="ml-[10px]"><path d="M4 1.500 6.500 4 4.500 6.200 1.800 3.500Q.5 7 3.500 8.200l2-.3L12 15l2.500-2.200L8 6.200Q8.500 1 4 1.500z" fill="#eee" stroke="#555" strokeWidth=".5" /></Svg>
        </div>
        <Svg w={15} h={14} c="ml-[5px]"><path d="M6 1.500V13H.5z" fill="#c9d0da" /><path d="M9 1.500V13h5.500z" fill="url(#bg)" /></Svg>
        <Svg w={6} h={4} c="ml-[3px]"><path d="M0 0h6L3 3.500z" fill="#8a8a8a" /></Svg>
        <T s="MIRROR" w={42} c="ml-[7px] font-bold" />
        <T s="Specify first point of mirror line:" w={245} c="ml-[5px]" />
        <div className="ml-[9px] h-[15px] w-px bg-black" />
        <Svg w={8} h={5} c="ml-auto mr-[4px]"><path d="M0 4.500h7L3.500.5z" fill="#111" /></Svg>
      </div>
    </div>
  );
}

/* ---------- status bar ---------- */
const Box = ({ cls, children }: any) => <div className={"flex h-[27px] shrink-0 items-center border border-[#7c7c7c] bg-[#505050] " + cls}>{children}</div>;

const Person = ({ c = "", on = false, k = 0 }: any) => (
  <Svg w={18} h={18} c={c}>
    <path d="M8 .5h2l1 8 5.500 5.500-.5 3h-3.500L9 12.500 5.500 17H2l-.5-3L7 8.500z" fill={on ? "#2e94ff" : "#bfbfbf"} />
    {k === 1 && <circle cx="13" cy="4" r="2.500" stroke="#2e94ff" strokeWidth="1.300" fill="#505050" />}
    {k === 2 && <path d="M14.500 0l-3 4h2.500l-1.500 4 4-5H14z" fill="#d5d5d5" />}
  </Svg>
);

function StatusRow() {
  return (
    <div className="flex h-[29px] shrink-0 border-t border-[#5b5b5b] bg-[#383838] text-[12px] text-white">
      <div className="relative h-[20px] w-[1355px] shrink-0 leading-[14px]">
        <Svg w={240} h={18}>
          <path d="M1 .5H12Q14 3 15.500 11t6 6H62q4-1 6-9T71 0H1z" fill="url(#modOn)" />
          <path d="M70 0q3 3 4 11t5 6h47q5 0 7-9t4-8z" fill="#565656" stroke="#666" strokeWidth=".6" />
          <path d="M134 0q3 3 4 11t5 6h49q5 0 7-9t4-8z" fill="#565656" stroke="#666" strokeWidth=".6" />
          <path d="M226.500.5H216q-8 1-12 14.500h9q11 0 13.500-14.500z" fill="#4b4b4b" stroke="#606060" strokeWidth=".7" />
          <path d="M211 8h8M215 4v8" stroke="#c9c9c9" strokeWidth="1.800" />
        </Svg>
        <div className="absolute left-[23px] top-[1px] flex text-[#b5b5b5]">
          <T s="Model" w={35} c="font-bold text-white" /><T s="Layout1" w={41} c="ml-[23px]" /><T s="Layout2" w={42} c="ml-[24px]" />
        </div>
      </div>
      <div className="flex items-start gap-px bg-[#3a3a3a]">
        <Box cls="w-[49px] pl-[3px]"><T s="MODEL" w={40} /></Box>
        <Box cls="w-[65px] pl-[4px]">
          <Svg w={16} h={16}><path d="M2.500 0v16M6.500 0v16M10.500 0v16M14.500 0v16" stroke="#2e94ff" strokeWidth="1.400" /><path d="M0 3.500h16M0 7.500h16M0 11.500h16" stroke="#2e94ff" strokeDasharray="1 1" /></Svg>
          <Svg w={15} h={15} c="ml-[8px]">{[0.5, 3.500, 6.500, 9.500, 12.500].map((y) => <path key={y} d={`M0 ${y}h14`} stroke="#d5d5d5" strokeDasharray="1 2" />)}</Svg>
          <Arrow big c="ml-[9px]" />
        </Box>
        <Box cls="w-[104px] pl-[6px]">
          <Svg w={14} h={14}><path d="M1 0v13h12.500M1 9h4v4" stroke="#c9c9c9" strokeWidth="1.300" /></Svg>
          <Svg w={16} h={16} c="ml-[9px]"><circle cx="7" cy="8" r="6" stroke="#2e94ff" strokeWidth="1.600" /><path d="M7 8h9M7 8l5-5v7" stroke="#2e94ff" strokeWidth="1.300" /></Svg>
          <Arrow big c="ml-[7px]" />
          <Svg w={18} h={18} c="ml-[8px]"><path d="M1 1l16 16" stroke="#b9b9b9" strokeWidth="1.200" /><path d="M10 0v18" stroke="#d5d5d5" /></Svg>
          <Arrow big c="ml-[7px]" />
        </Box>
        <Box cls="ml-[-2px] w-[65px] pl-[3px]">
          <Svg w={18} h={15}><path d="M14 1 3 13.500h14" stroke="#2e94ff" strokeWidth="1.600" /><path d="M8 6.500l3 2.500" stroke="#2e94ff" strokeWidth="3" /></Svg>
          <Svg w={17} h={17} c="ml-[7px]"><rect x="3" y="3" width="12" height="12" stroke="#2e94ff" strokeWidth="1.300" /><rect x=".7" y=".7" width="4" height="4" fill="#1bd51b" stroke="#063" /></Svg>
          <Arrow big c="ml-[7px]" />
        </Box>
        <Box cls="w-[107px] pl-[4px]">
          <Person on k={1} /><Person k={2} c="ml-[6px]" /><Person c="ml-[6px]" />
          <T s="1:1" w={13} c="ml-[8px]" />
          <Arrow big c="ml-[5px]" />
        </Box>
        <Box cls="w-[41px] pl-[5px]">
          <Svg w={14} h={14}><circle cx="7" cy="7" r="4" stroke="#c5c5c5" strokeWidth="3" /><path d="M7 0v3M7 11v3M0 7h3M11 7h3M2 2l2 2M10 10l2 2M12 2l-2 2M4 10l-2 2" stroke="#c5c5c5" strokeWidth="2" /></Svg>
          <Arrow big c="ml-[9px]" />
        </Box>
        <Box cls="ml-[-2px] w-[26px] justify-center"><Svg w={15} h={15}><path d="M7.500 0v15M0 7.500h15" stroke="#c9c9c9" strokeWidth="1.700" /></Svg></Box>
        <Box cls="w-[26px] justify-center"><Svg w={16} h={16}><rect x="1" y="1" width="6.500" height="6.500" stroke="#c9c9c9" /><circle cx="12" cy="6.500" r="3" stroke="#c9c9c9" /><path d="M7 9.500l3.500 5.500h-7z" stroke="#c9c9c9" /></Svg></Box>
        <Box cls="w-[26px] justify-center"><Svg w={18} h={18}><circle cx="9" cy="9" r="8" fill="#16548f" stroke="#2e94ff" strokeWidth="1.500" /><path d="M8 10.500l5-4" stroke="#62b3ff" strokeWidth="1.500" /></Svg></Box>
        <Box cls="w-[51px] pl-[5px]">
          <Svg w={16} h={13}><rect x=".7" y=".7" width="14.600" height="11.600" stroke="#c9c9c9" strokeWidth="1.300" /><path d="M9 3h4v3.500M13 3 9.500 6M7 10H3V6.500M3 10l3.500-3" stroke="#c9c9c9" strokeWidth="1.200" /></Svg>
          <Svg w={15} h={13} c="ml-[8px]"><path d="M0 1.500h15M0 6.500h15M0 11.500h15" stroke="#c9c9c9" strokeWidth="2" /></Svg>
        </Box>
      </div>
    </div>
  );
}

/* ---------- taskbar ---------- */
function Taskbar() {
  return (
    <div className="flex h-[40px] shrink-0 items-center bg-[#010306] text-[12px] leading-[16px] text-white">
      <div className="flex h-full w-[48px] items-center pl-[16px]"><Svg w={16} h={16}><path d="M0 2.300 6.500 1.400V7.600H0zM7.300 1.300 16 0v7.600H7.300zM0 8.400h6.500v6.200L0 13.700zM7.300 8.400H16V16l-8.700-1.300z" fill="#fff" /></Svg></div>
      <div className="flex h-full w-[344px] items-center bg-[#333] pl-[9px]">
        <Svg w={22} h={22}><circle cx="11" cy="11" r="9" stroke="#fff" strokeWidth="2.600" /></Svg>
        <T s="Ask me anything" w={109} c="ml-[5px] text-[15px] text-[#a0a0a0]" />
        <Svg w={12} h={17} c="ml-[172px]"><rect x="3.500" y=".5" width="5" height="10" stroke="#a8a8a8" /><path d="M.7 7v5.500h10.600V7M6 12.500v3.500M3 16h6" stroke="#a8a8a8" /></Svg>
      </div>
      <Svg w={20} h={16} c="ml-[14px]"><path d="M5 1h10v14H5zM3 3.500H.8v9H3M17 3.500h2.200v9H17" stroke="#f0f0f0" strokeWidth="1.200" /></Svg>
      <Svg w={21} h={20} c="ml-[30px]"><path d="M0 1h8l2 2h11v16H0z" fill="#f5cf63" /><path d="M0 5h21v14H0z" fill="#ffe596" /><path d="M4 11h13v9h-3v-5H7v5H4z" fill="#35a7e0" /></Svg>
      <div className="ml-[19px] flex h-full w-[152px] items-center border-b-2 border-[#6fb1ec] pl-[7px] pt-[2px]">
        <Svg w={22} h={22}><circle cx="11" cy="11" r="11" fill="#fbc116" /><path d="M1.500 5.500A11 11 0 0 1 20.500 5.500L11 6 7 14z" fill="#e33b2e" /><path d="M1.500 5.500A11 11 0 0 0 10.500 22L15 13.500 7 14z" fill="#2da94f" /><circle cx="11" cy="11" r="5.200" fill="#fff" /><circle cx="11" cy="11" r="4.100" fill="#4486f4" /></Svg>
        <T s="UCS (Command) | ..." w={108} c="ml-[5px]" />
      </div>
      <Svg w={23} h={23} c="ml-[17px]"><circle cx="11.500" cy="11.500" r="11" fill="#e96a1c" /><path d="M5 4Q9-.5 15 1t7 8-3 9q-4 3-9 1-4-2-4-7z" fill="#2b6cb8" /><path d="M8 3q4-3 8-1 1 3-2 5t-5 1z" fill="#58b6ea" /><path d="M1 9Q1 4 4 2q0 3 3 3 3 1 3.500 3.500L8 10q0 4 3 5.500t5-.5q-2 4-7 3.500T1 9z" fill="#f68b1f" /><path d="M21 6Q24 12 20 18t-9 4.500q7-2.500 9-8t1-8.500z" fill="#ffc331" /></Svg>
      <Svg w={23} h={22} c="ml-[27px]"><path d="M0 13l7-4 4 3-5 4z" fill="#4a8fc8" /><path d="M7 9Q12 4 15 0l-4 13-3 1z" fill="#68a9d8" /><path d="M15 0q3 6 8 17-4-4-7 0-3 4-5 4.500-1-5-5-5.500Q12 13 15 0z" fill="#e2651c" /><path d="M15 0q0 10-4 21.500Q9 17 6 16 12 12 15 0z" fill="#a52c14" /><path d="M15.500 3q2 6 3 11l-3 3z" fill="#f8a23a" /></Svg>
      <div className="ml-[13px] flex h-full w-[160px] items-center border-b-2 border-[#6fb1ec] bg-[#33373c] pl-[10px] pt-[2px]">
        <div className="flex h-[24px] w-[24px] items-center justify-center bg-[#fbe4dc]"><AutoA s={17} /></div>
        <T s="Autodesk AutoCAD..." w={111} c="ml-[4px]" />
      </div>
      <Svg w={24} h={24} c="ml-[13px]"><circle cx="11.500" cy="12" r="11" fill="url(#sky)" /><path d="M2 7Q1.500 4 6 3q-1 4 4 8t9 5q-1 3-5 3.500Q5 17 2 7z" fill="#eef7fc" /><path d="M15 14q4-3 8-3l.5 8q-3 4-8 3z" fill="#0b5f9e" /></Svg>
      <Svg w={24} h={24} c="ml-[25px]"><g stroke="#111" strokeWidth=".5"><path d="M12 0l6 6-6 6-6-6z" fill="#f28a86" /><path d="M6 6l6 6-6 6-6-6z" fill="#86b1f7" /><path d="M18 6l6 6-6 6-6-6z" fill="#8ccf4e" /><path d="M12 12l6 6-6 6-6-6z" fill="#f7e38c" /></g><path d="M10 3l2 3v12M12 8l5 4" stroke="#1a1a1a" strokeWidth="1.500" /><circle cx="12" cy="6.500" r="1.800" fill="#1a1a1a" /><circle cx="17" cy="12" r="1.800" fill="#1a1a1a" /><circle cx="12" cy="17.500" r="1.800" fill="#1a1a1a" /></Svg>
      <div className="ml-[26px] flex h-[24px] w-[22px] flex-col bg-[#f3f3f3]">
        <div className="flex h-[7px] items-center justify-center bg-[#2f6fc4] font-['Liberation_Serif'] text-[9px] font-bold leading-[7px]">Tek</div>
        <Svg w={22} h={17}><path d="M3 3h17M15 1v2M15 13v4M3 14.500h17" stroke="#222" /><rect x="5.500" y="5" width="12" height="7.500" fill="#1a1a1a" stroke="#aaa" strokeWidth=".8" /><path d="M6 10h3V7.500h4.500V10H17" stroke="#e8e31f" /></Svg>
      </div>
      <Svg w={12} h={8} c="ml-[692px]"><path d="M1 7l5-5 5 5" stroke="#eee" strokeWidth="1.400" /></Svg>
      <Svg w={17} h={15} c="ml-[10px]"><path d="M6 2.500h10v8H4V7M8 10.500V14M5 14h8" stroke="#eee" strokeWidth="1.200" /><rect x=".7" y=".7" width="4.500" height="5" fill="#111" stroke="#eee" strokeWidth="1.100" /><path d="M3 6v3" stroke="#eee" /></Svg>
      <Svg w={17} h={15} c="ml-[7px]"><path d="M.7 5h2.500L7 1.500v12L3.200 10H.7z" stroke="#eee" /><path d="M9 5.500q1.200 2 0 4M11 3.500q3 4 0 8M13.500 1.500q4.500 6 0 12" stroke="#eee" /></Svg>
      <div className="ml-[7px] flex w-[56px] flex-col items-center gap-[2px] leading-[16px]"><T s="11:46 AM" w={49} /><T s="8/11/2017" w={52} /></div>
      <Svg w={17} h={17} c="ml-[16px]"><path d="M1 1h15v11.500h-5L8.500 15 6 12.500H1z" stroke="#eee" strokeWidth="1.300" /></Svg>
      <div className="ml-auto mr-[4px] h-full w-px bg-[#4a4a4a]" />
    </div>
  );
}

export default function App() {
  return (
    <div className="flex h-[1080px] w-[1920px] flex-col overflow-hidden bg-[#383838] font-['Open_Sans','Noto_Sans',sans-serif]">
      <Defs />
      <TitleBar />
      <RibbonTabs />
      <Ribbon />
      <FileTabs />
      <Canvas />
      <StatusRow />
      <Taskbar />
    </div>
  );
}
